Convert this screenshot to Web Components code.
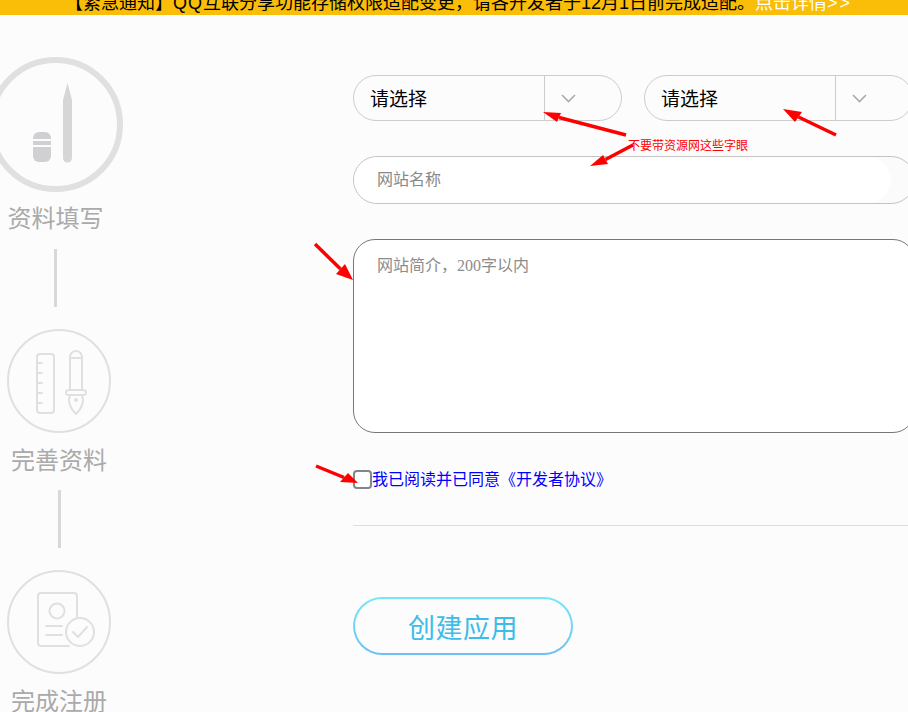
<!doctype html>
<html lang="zh-CN">
<head>
<meta charset="utf-8">
<title>创建应用</title>
<style>
  html, body { margin: 0; height: 712px; overflow: hidden; }
  body {
    position: relative;
    background: #fcfcfc;
    font-family: "Liberation Sans", "Noto Sans CJK SC", sans-serif;
  }
  .page { display: flex; align-items: flex-start; }
  step-rail { width: 353px; flex: none; }
  apply-form { width: 562px; flex: none; }
  svg { display: block; flex: none; }
</style>
</head>
<body>
<notice-bar>【紧急通知】<span style="letter-spacing:1px">QQ</span>互联分享功能存储权限适配变更，请各开发者于12月1日前完成适配。<span slot="link">点击详情<span style="letter-spacing:2px">&gt;&gt;</span></span></notice-bar>

<div class="page">
  <step-rail>
    <step-item big offset="-12" gap="10" label="资料填写">
      <svg viewBox="-6 63 123 123" width="123" height="123" fill="#d6d6d6">
        <path d="M67.500 83l4.500 17v58a4.500 4.500 0 0 1-9 0v-58z"/>
        <path fill="#d0d0d3" d="M39 132h6a6 6 0 0 1 6 6v18a6 6 0 0 1-6 6h-6a6 6 0 0 1-6-6v-18a6 6 0 0 1 6-6z"/>
        <path fill="#fcfcfc" d="M33 139h18v2h-18zM33 145h18v2h-18z"/>
      </svg>
    </step-item>
    <step-line offset="54" top="15"></step-line>
    <step-item offset="7" top="22" gap="11" label="完善资料">
      <svg viewBox="9 331 100 100" width="100" height="100" fill="none" stroke="#e0e0e0" stroke-width="2" stroke-linecap="round" stroke-linejoin="round">
        <rect x="37" y="354" width="17" height="59" rx="3"/>
        <path d="M37 363h5M37 373h5M37 383h5M37 393h5M37 403h5"/>
        <path d="M70 390v-33a6 6 0 0 1 12 0v33M70 358h12"/>
        <rect x="66" y="390" width="20" height="5" rx="2.500"/>
        <path d="M70 395c-2 5-1 12 6 19 7-7 8-14 6-19"/>
        <circle cx="76" cy="400" r="1" fill="#e0e0e0"/>
      </svg>
    </step-item>
    <step-line offset="58" top="14"></step-line>
    <step-item offset="7" top="22" gap="11" label="完成注册">
      <svg viewBox="9 572 100 100" width="100" height="100" fill="none" stroke="#e0e0e0" stroke-width="2" stroke-linecap="round" stroke-linejoin="round">
        <path d="M69 646h-28a3 3 0 0 1-3-3v-47a3 3 0 0 1 3-3h33a3 3 0 0 1 3 3v21"/>
        <circle cx="57" cy="611" r="7.500"/>
        <path d="M46 626h16M46 635h16"/>
        <circle cx="80" cy="632" r="14"/>
        <path d="M73 632l5 5 9-10"/>
      </svg>
    </step-item>
  </step-rail>

  <apply-form>
    <select-box slot="first">请选择</select-box>
    <select-box slot="second">请选择</select-box>
    <text-field slot="name">网站名称</text-field>
    <text-area-box slot="intro">网站简介，200字以内</text-area-box>
    <agree-row slot="agree">我已阅读并已同意《开发者协议》</agree-row>
    <pill-button slot="submit">创建应用</pill-button>
  </apply-form>
</div>

<mark-up note="不要带资源网这些字眼"></mark-up>

<script>
const define = (tag, css, html, extra = {}) => {
  class Item extends HTMLElement {
    constructor() {
      super()
      this.attachShadow({ mode: 'open' })
      this.shadowRoot.innerHTML = `<style>${css}</style>${html}`
    }
    connectedCallback() {
      if (extra.ready) extra.ready(this)
    }
  }
  customElements.define(tag, Item)
}

define('notice-bar', `
  :host {
    display: block;
    height: 15px;
    overflow: hidden;
    background: #fabd08;
    color: #000;
    font-size: 18px;
    line-height: 22px;
    white-space: nowrap;
  }
  .line { display: flex; margin-top: -8px; padding-left: 65px; }
  .link { color: #fff; }
`, `<div class="line"><span><slot></slot></span><span class="link"><slot name="link"></slot></span></div>`)

define('step-rail', `
  :host { display: flex; flex-direction: column; align-items: flex-start; padding-top: 42px; }
`, `<slot></slot>`)

define('step-item', `
  :host {
    display: block;
    width: 104px;
    margin-left: var(--offset, 0);
    margin-top: var(--top, 0);
  }
  :host([big]) { width: 135px; }
  .ring {
    box-sizing: border-box;
    width: 104px;
    height: 104px;
    border: 2px solid #e0e0e0;
    border-radius: 50%;
    display: flex;
    align-items: center;
    justify-content: center;
  }
  :host([big]) .ring { width: 135px; height: 135px; border-width: 6px; }
  .label {
    height: 32px;
    margin-top: var(--gap, 10px);
    text-align: center;
    font-size: 24px;
    line-height: 34px;
    color: #aaa;
    white-space: nowrap;
  }
`, `<div class="ring"><slot></slot></div><div class="label"></div>`, {
  ready(el) {
    el.style.setProperty('--offset', `${el.getAttribute('offset') || 0}px`)
    el.style.setProperty('--top', `${el.getAttribute('top') || 0}px`)
    el.style.setProperty('--gap', `${el.getAttribute('gap') || 10}px`)
    el.shadowRoot.querySelector('.label').textContent = el.getAttribute('label')
  }
})

define('step-line', `
  :host {
    display: block;
    width: 3px;
    height: 58px;
    background: #d8d8d8;
    margin-left: var(--offset, 0);
    margin-top: var(--top, 0);
  }
`, ``, {
  ready(el) {
    el.style.setProperty('--offset', `${el.getAttribute('offset') || 0}px`)
    el.style.setProperty('--top', `${el.getAttribute('top') || 0}px`)
  }
})

define('apply-form', `
  :host { display: block; padding-top: 60px; }
  .selects { display: flex; gap: 22px; margin-bottom: 35px; }
  .name { margin-bottom: 35px; }
  .agree { margin-top: 37px; padding-bottom: 36px; border-bottom: 1px solid #ddd; }
  .submit { margin-top: 71px; }
`, `
  <div class="selects"><slot name="first"></slot><slot name="second"></slot></div>
  <div class="name"><slot name="name"></slot></div>
  <slot name="intro"></slot>
  <div class="agree"><slot name="agree"></slot></div>
  <div class="submit"><slot name="submit"></slot></div>
`)

define('select-box', `
  :host {
    box-sizing: border-box;
    display: flex;
    width: 269px;
    height: 46px;
    border: 1px solid #ccc;
    border-radius: 23px;
    color: #000;
    font-size: 19px;
    line-height: 47px;
  }
  .value { width: 191px; box-sizing: border-box; padding-left: 16px; border-right: 1px solid #ccc; }
  .arrow { flex: 1; display: flex; align-items: center; padding-left: 16px; }
`, `<div class="value"><slot></slot></div>
  <div class="arrow"><svg width="15" height="9" viewBox="0 0 15 9" fill="none" stroke="#aaa" stroke-width="1.600"><path d="M1 1l6.500 6.500L14 1"/></svg></div>`)

define('text-field', `
  :host {
    box-sizing: border-box;
    display: block;
    height: 48px;
    border: 1px solid #c4c4c4;
    border-radius: 24px;
    background: #fbfbfb;
    overflow: hidden;
  }
  .inner {
    width: 537px;
    height: 46px;
    box-sizing: border-box;
    padding-left: 23px;
    background: #fff;
    border-radius: 23px;
    color: #888;
    font-size: 16px;
    line-height: 46px;
  }
`, `<div class="inner"><slot></slot></div>`)

define('text-area-box', `
  :host {
    box-sizing: border-box;
    display: block;
    height: 194px;
    padding: 16px 23px;
    border: 1px solid #777;
    border-radius: 22px;
    background: #fff;
    color: #8c8c8c;
    font-family: "Liberation Serif", "Noto Sans CJK SC", serif;
    font-size: 16px;
    line-height: 20px;
  }
`, `<slot></slot>`)

define('agree-row', `
  :host { display: flex; align-items: center; color: #00f; font-size: 16px; line-height: 19px; }
  .box {
    box-sizing: border-box;
    width: 19px;
    height: 19px;
    border: 2px solid #858585;
    border-radius: 4px;
    background: #fff;
  }
`, `<span class="box"></span><slot></slot>`)

define('pill-button', `
  :host {
    box-sizing: border-box;
    display: block;
    width: 220px;
    height: 58px;
    border: 2px solid transparent;
    border-radius: 29px;
    background:
      linear-gradient(#fcfcfc, #fcfcfc) padding-box,
      linear-gradient(#74e8f8, #6fc0f3) border-box;
    color: #3bbdea;
    font-size: 27px;
    letter-spacing: 0.5px;
    line-height: 60px;
    text-align: center;
  }
`, `<slot></slot>`)

// red arrows drawn over the screenshot: tail, tip, and the two back corners of the head
const ARROWS = [
  [626, 135, 543, 112, 557, 122, 561, 113],
  [633, 145, 590, 166, 603, 155, 608, 164],
  [836, 135, 783, 109, 802, 112, 795, 122],
  [315, 244, 353, 280, 345, 264, 336, 274],
  [316, 466, 358, 483, 348, 473, 340, 482]
]

define('mark-up', `
  :host { position: absolute; inset: 0; pointer-events: none; }
  svg { position: absolute; left: 0; top: 0; }
  .note {
    position: absolute;
    left: 628px;
    top: 138px;
    color: #f00;
    font-size: 12px;
    line-height: 16px;
    white-space: nowrap;
  }
`, `<svg width="908" height="712" viewBox="0 0 908 712"></svg><div class="note"></div>`, {
  ready(el) {
    el.shadowRoot.querySelector('.note').textContent = el.getAttribute('note')
    el.shadowRoot.querySelector('svg').innerHTML = ARROWS.map(([x1, y1, x2, y2, ax, ay, bx, by]) => `
      <line x1="${x1}" y1="${y1}" x2="${(ax + bx) / 2}" y2="${(ay + by) / 2}" stroke="#f00" stroke-width="3.500"/>
      <polygon points="${x2},${y2} ${ax},${ay} ${bx},${by}" fill="#f00"/>`).join('')
  }
})
</script>
</body>
</html>
